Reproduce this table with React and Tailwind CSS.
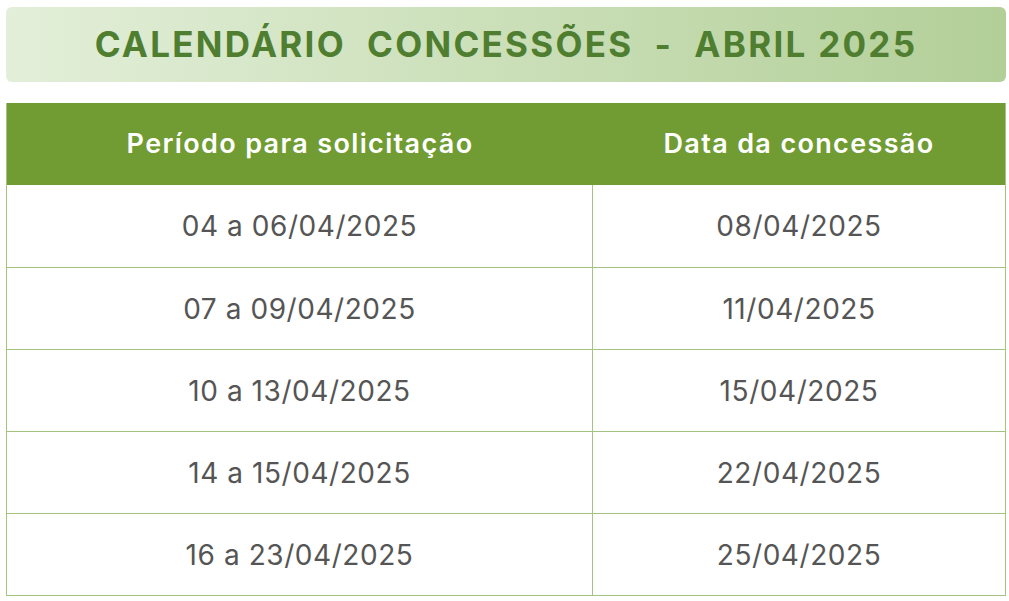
import React from 'react';

const rows = [
  ['04 a 06/04/2025', '08/04/2025'],
  ['07 a 09/04/2025', '11/04/2025'],
  ['10 a 13/04/2025', '15/04/2025'],
  ['14 a 15/04/2025', '22/04/2025'],
  ['16 a 23/04/2025', '25/04/2025'],
];

const App = () => {
  return (
    <div className="w-[1009px] h-[601px] bg-white pl-[6px] pt-[7px] font-['Inter',sans-serif]">
      <div className="w-[1000px]">
        {/* Title */}
        <div className="h-[75px] rounded-md bg-gradient-to-r from-[#e3efd9] to-[#b3cf98] flex items-center justify-center">
          <h1 className="text-[35px] font-bold tracking-[0.065em] text-[#4f7e30] whitespace-pre">
            CALENDÁRIO  CONCESSÕES  -  ABRIL 2025
          </h1>
        </div>

        {/* Table */}
        <div className="mt-[21px] border border-[#a3c37f] border-t-0">
          <div className="grid grid-cols-[586px_1fr] h-[82px] bg-[#709c33] text-white text-[27px] font-semibold tracking-[0.05em]">
            <div className="flex items-center justify-center">Período para solicitação</div>
            <div className="flex items-center justify-center">Data da concessão</div>
          </div>
          {rows.map(([periodo, data], i) => (
            <div
              key={i}
              className={`grid grid-cols-[586px_1fr] h-[82px] text-[28px] text-[#555555] tracking-[0.02em] ${i > 0 ? 'border-t border-[#a3c37f]' : ''}`}
            >
              <div className="flex items-center justify-center border-r border-[#a3c37f]">{periodo}</div>
              <div className="flex items-center justify-center">{data}</div>
            </div>
          ))}
        </div>
      </div>
    </div>
  );
};

export default App;
